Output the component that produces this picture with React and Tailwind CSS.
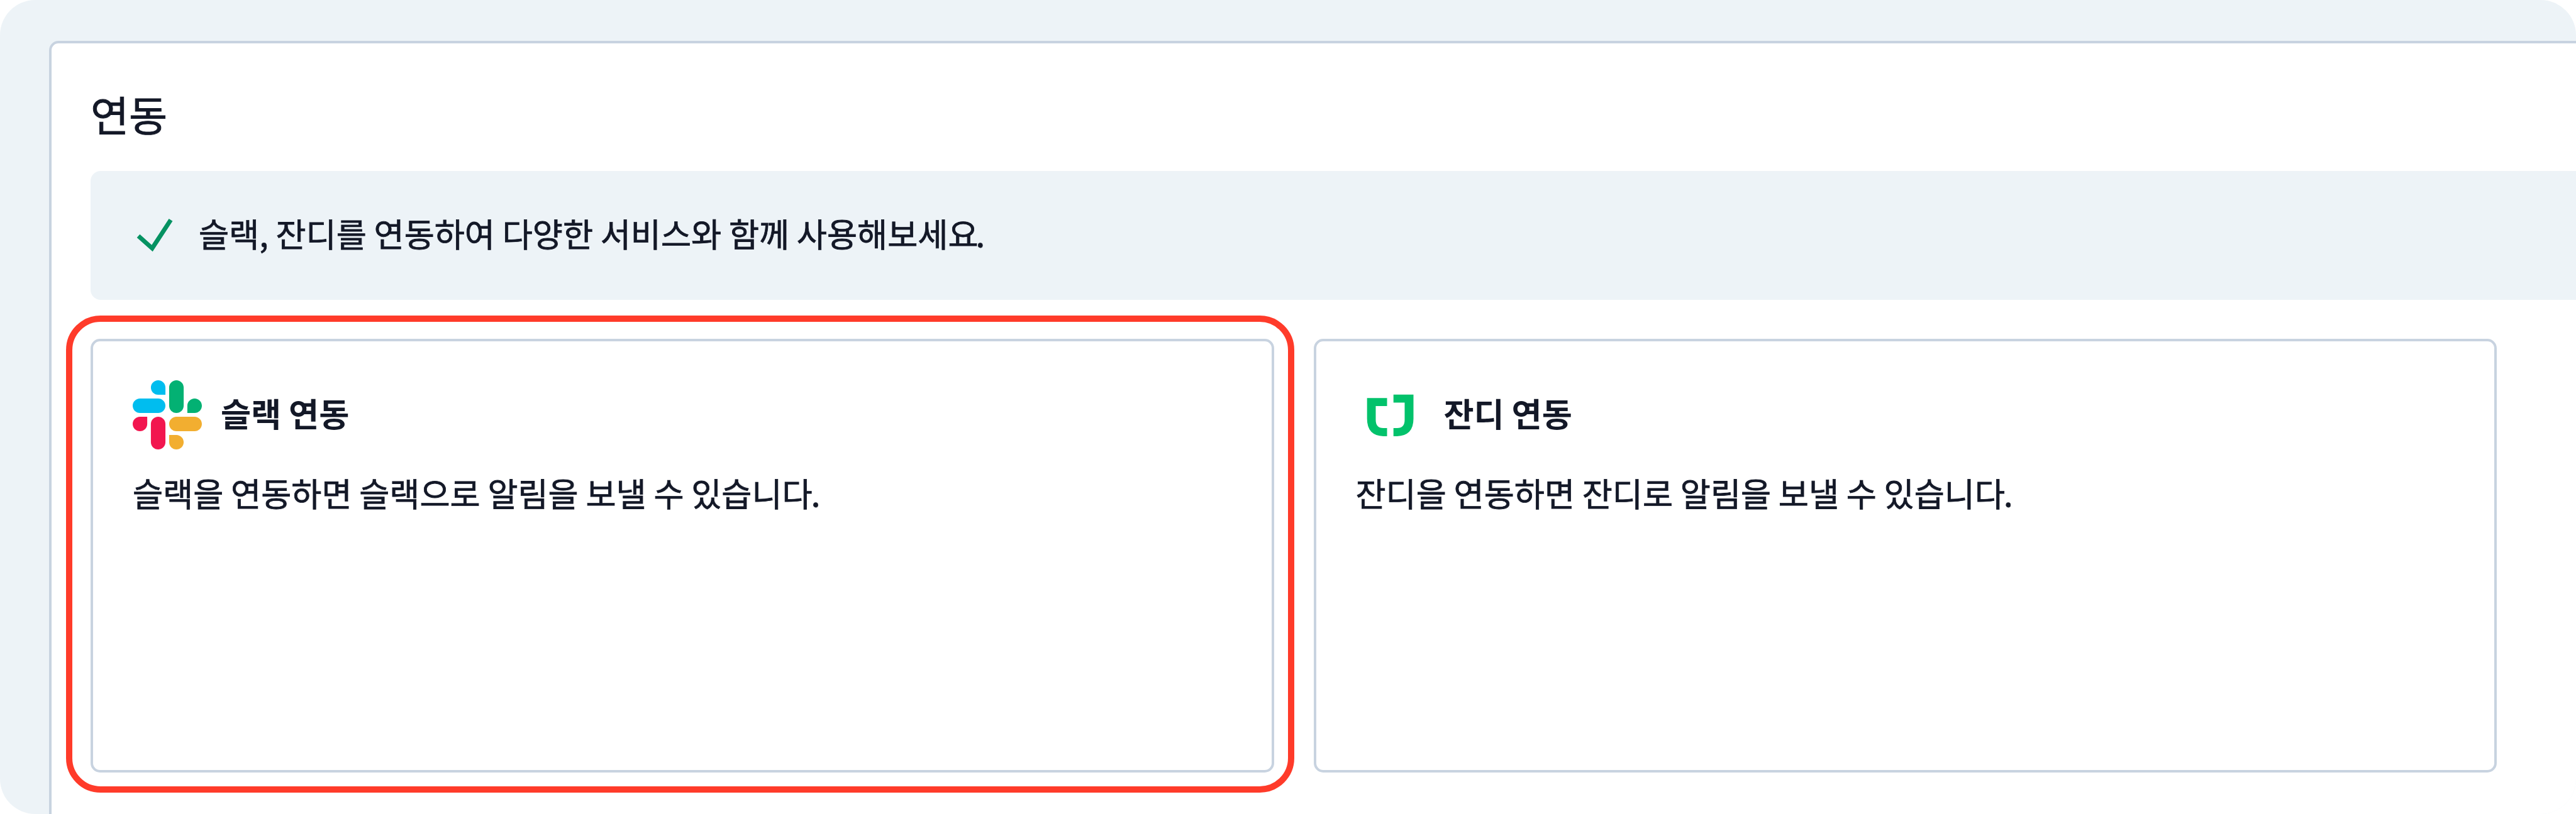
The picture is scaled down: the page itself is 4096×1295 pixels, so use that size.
function CheckIcon() {
  return (
    <svg className="h-[60px] w-[60px] shrink-0" viewBox="0 0 60 60" fill="none">
      <path d="M4 30.3 L26 50 L55.5 4.8" stroke="#059262" strokeWidth="7" />
    </svg>
  );
}

function SlackLogo() {
  return (
    <svg className="h-[110px] w-[110px] shrink-0" viewBox="0 0 122.8 122.8">
      <path fill="#f2164f" d="M25.8 77.6c0 7.1-5.8 12.9-12.9 12.9S0 84.7 0 77.6s5.8-12.9 12.9-12.9h12.9v12.9zm6.5 0c0-7.1 5.8-12.9 12.9-12.9s12.9 5.8 12.9 12.9v32.3c0 7.1-5.8 12.9-12.9 12.9s-12.9-5.8-12.9-12.9V77.6z" />
      <path fill="#00bdef" d="M45.2 25.8c-7.1 0-12.9-5.8-12.9-12.9S38.1 0 45.2 0s12.9 5.8 12.9 12.9v12.9H45.2zm0 6.5c7.1 0 12.9 5.8 12.9 12.9s-5.8 12.9-12.9 12.9H12.9C5.8 58.1 0 52.3 0 45.2s5.8-12.9 12.9-12.9h32.3z" />
      <path fill="#03b173" d="M97 45.2c0-7.1 5.8-12.9 12.9-12.9s12.9 5.8 12.9 12.9-5.8 12.9-12.9 12.9H97V45.2zm-6.5 0c0 7.1-5.8 12.9-12.9 12.9s-12.9-5.8-12.9-12.9V12.9C64.7 5.8 70.5 0 77.6 0s12.9 5.8 12.9 12.9v32.3z" />
      <path fill="#f2ae30" d="M77.6 97c7.1 0 12.9 5.8 12.9 12.9s-5.8 12.9-12.9 12.9-12.9-5.8-12.9-12.9V97h12.9zm0-6.5c-7.1 0-12.9-5.8-12.9-12.9s5.8-12.9 12.9-12.9h32.3c7.1 0 12.9 5.8 12.9 12.9s-5.8 12.9-12.9 12.9H77.6z" />
    </svg>
  );
}

function JandiLogo() {
  return (
    <svg className="h-[110px] w-[110px] shrink-0" viewBox="0 0 110 110" fill="#02c26b">
      <path d="M17.7 28.3H49.5V41H31.5V63Q31.5 76 43.5 76H49.5V89H43.5Q17.7 88 17.7 61Z" />
      <path d="M59.7 22.7H91.5V61Q91.5 88 65.5 89H59.7V76H65.5Q77.5 76 77.5 63V35.5H59.7Z" />
    </svg>
  );
}

function IntegrationCard({ logo, title, description }) {
  return (
    <article className="h-[690px] rounded-[15px] border-4 border-[#c8d3e0] px-[63px] pt-[62px]">
      <div className="flex items-center gap-[30px]">
        {logo}
        <h2 className="-mt-2 text-[52.3px] leading-[80px] font-bold">{title}</h2>
      </div>
      <p className="mt-7 text-[52.3px] leading-[80px] [-webkit-text-stroke:0.8px]">
        {description}
        <span className="-ml-0.5">.</span>
      </p>
    </article>
  );
}

export default function App() {
  return (
    <div className="h-[1295px] w-[4096px] overflow-hidden rounded-[56px] bg-[#edf3f7] pt-[65px] pl-[78px] font-['Noto_Sans_CJK_KR',sans-serif] text-[#131827]">
      <main className="h-[1300px] w-[4100px] rounded-tl-[15px] border-4 border-[#c8d3e0] bg-white pl-[62px]">
        <h1 className="pt-[61px] text-[66.4px] leading-[100px] [-webkit-text-stroke:0.9px]">연동</h1>
        <div className="mt-[42px] flex h-[205px] items-center gap-10 rounded-l-[16px] bg-[#edf3f7] pl-[72px]">
          <CheckIcon />
          <p className="-mt-2.5 text-[52.3px] leading-[80px] [-webkit-text-stroke:0.8px]">
            슬랙, 잔디를 연동하여 다양한 서비스와 함께 사용해보세요
            <span className="-ml-1">.</span>
          </p>
        </div>
        <section className="relative mt-[62px] grid w-[3826px] grid-cols-2 gap-[63px]">
          <IntegrationCard logo={<SlackLogo />} title="슬랙 연동" description="슬랙을 연동하면 슬랙으로 알림을 보낼 수 있습니다" />
          <IntegrationCard logo={<JandiLogo />} title="잔디 연동" description="잔디을 연동하면 잔디로 알림을 보낼 수 있습니다" />
          <div className="pointer-events-none absolute top-[-37px] left-[-39px] h-[759px] w-[1953px] rounded-[55px] border-10 border-[#ff3b2a]" />
        </section>
      </main>
    </div>
  );
}
